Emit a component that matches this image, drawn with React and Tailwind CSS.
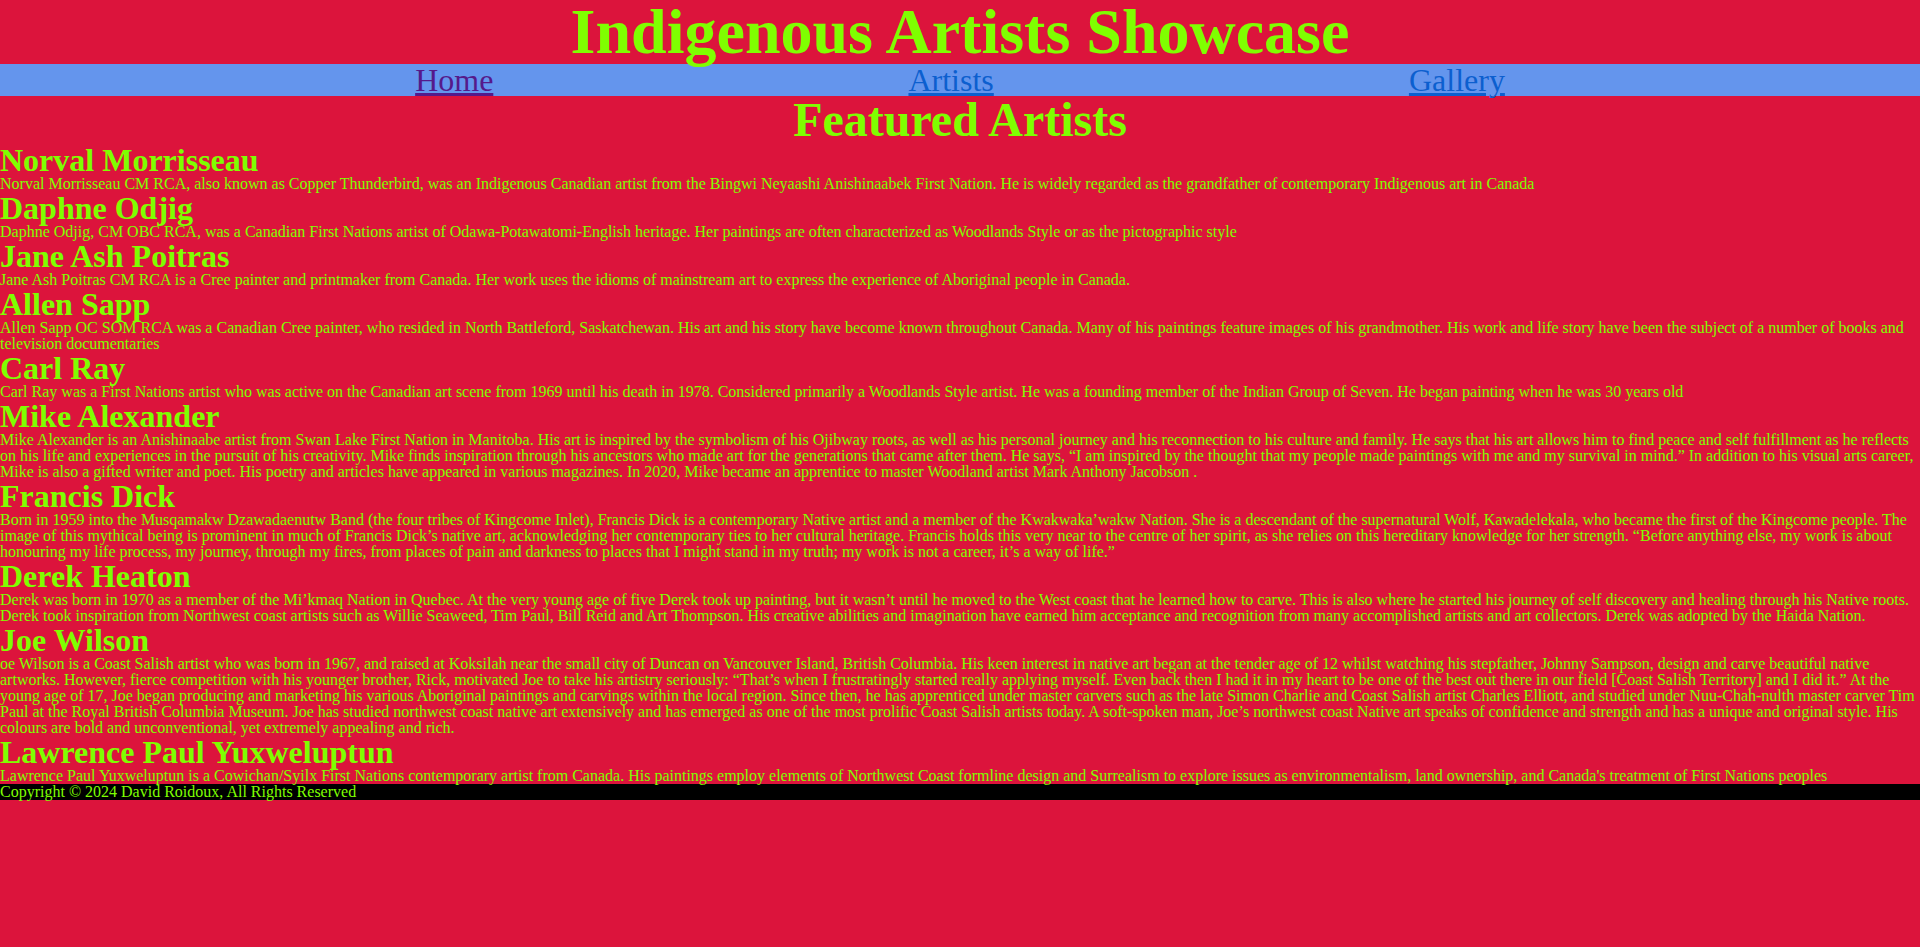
import React from "react";

const artists = [
  {
    name: "Norval Morrisseau",
    bio: "Norval Morrisseau CM RCA, also known as Copper Thunderbird, was an Indigenous Canadian artist from the Bingwi Neyaashi Anishinaabek First Nation. He is widely regarded as the grandfather of contemporary Indigenous art in Canada",
  },
  {
    name: "Daphne Odjig",
    bio: "Daphne Odjig, CM OBC RCA, was a Canadian First Nations artist of Odawa-Potawatomi-English heritage. Her paintings are often characterized as Woodlands Style or as the pictographic style",
  },
  {
    name: "Jane Ash Poitras",
    bio: "Jane Ash Poitras CM RCA is a Cree painter and printmaker from Canada. Her work uses the idioms of mainstream art to express the experience of Aboriginal people in Canada.",
  },
  {
    name: "Allen Sapp",
    bio: "Allen Sapp OC SOM RCA was a Canadian Cree painter, who resided in North Battleford, Saskatchewan. His art and his story have become known throughout Canada. Many of his paintings feature images of his grandmother. His work and life story have been the subject of a number of books and television documentaries",
  },
  {
    name: "Carl Ray",
    bio: "Carl Ray was a First Nations artist who was active on the Canadian art scene from 1969 until his death in 1978. Considered primarily a Woodlands Style artist. He was a founding member of the Indian Group of Seven. He began painting when he was 30 years old",
  },
  {
    name: "Mike Alexander",
    bio: "Mike Alexander is an Anishinaabe artist from Swan Lake First Nation in Manitoba. His art is inspired by the symbolism of his Ojibway roots, as well as his personal journey and his reconnection to his culture and family. He says that his art allows him to find peace and self fulfillment as he reflects on his life and experiences in the pursuit of his creativity. Mike finds inspiration through his ancestors who made art for the generations that came after them. He says, \u201cI am inspired by the thought that my people made paintings with me and my survival in mind.\u201d In addition to his visual arts career, Mike is also a gifted writer and poet. His poetry and articles have appeared in various magazines. In 2020, Mike became an apprentice to master Woodland artist Mark Anthony Jacobson .",
  },
  {
    name: "Francis Dick",
    bio: "Born in 1959 into the Musqamakw Dzawadaenutw Band (the four tribes of Kingcome Inlet), Francis Dick is a contemporary Native artist and a member of the Kwakwaka\u2019wakw Nation. She is a descendant of the supernatural Wolf, Kawadelekala, who became the first of the Kingcome people. The image of this mythical being is prominent in much of Francis Dick\u2019s native art, acknowledging her contemporary ties to her cultural heritage. Francis holds this very near to the centre of her spirit, as she relies on this hereditary knowledge for her strength. \u201cBefore anything else, my work is about honouring my life process, my journey, through my fires, from places of pain and darkness to places that I might stand in my truth; my work is not a career, it\u2019s a way of life.\u201d",
  },
  {
    name: "Derek Heaton",
    bio: "Derek was born in 1970 as a member of the Mi\u2019kmaq Nation in Quebec. At the very young age of five Derek took up painting, but it wasn\u2019t until he moved to the West coast that he learned how to carve. This is also where he started his journey of self discovery and healing through his Native roots. Derek took inspiration from Northwest coast artists such as Willie Seaweed, Tim Paul, Bill Reid and Art Thompson. His creative abilities and imagination have earned him acceptance and recognition from many accomplished artists and art collectors. Derek was adopted by the Haida Nation.",
  },
  {
    name: "Joe Wilson",
    bio: "oe Wilson is a Coast Salish artist who was born in 1967, and raised at Koksilah near the small city of Duncan on Vancouver Island, British Columbia. His keen interest in native art began at the tender age of 12 whilst watching his stepfather, Johnny Sampson, design and carve beautiful native artworks. However, fierce competition with his younger brother, Rick, motivated Joe to take his artistry seriously: \u201cThat\u2019s when I frustratingly started really applying myself. Even back then I had it in my heart to be one of the best out there in our field [Coast Salish Territory] and I did it.\u201d At the young age of 17, Joe began producing and marketing his various Aboriginal paintings and carvings within the local region. Since then, he has apprenticed under master carvers such as the late Simon Charlie and Coast Salish artist Charles Elliott, and studied under Nuu-Chah-nulth master carver Tim Paul at the Royal British Columbia Museum. Joe has studied northwest coast native art extensively and has emerged as one of the most prolific Coast Salish artists today. A soft-spoken man, Joe\u2019s northwest coast Native art speaks of confidence and strength and has a unique and original style. His colours are bold and unconventional, yet extremely appealing and rich.",
  },
  {
    name: "Lawrence Paul Yuxweluptun",
    bio: "Lawrence Paul Yuxweluptun is a Cowichan/Syilx First Nations contemporary artist from Canada. His paintings employ elements of Northwest Coast formline design and Surrealism to explore issues as environmentalism, land ownership, and Canada's treatment of First Nations peoples",
  },
];

const App = () => {
  return (
    <div className="min-h-screen bg-[#dc143c] text-[#7fff00] font-['Liberation_Serif',serif] leading-none">
      <header>
        <h1 className="text-center text-[64px] font-bold leading-[64px]">Indigenous Artists Showcase</h1>
        <nav className="flex justify-evenly bg-[#6495ed] h-8">
          <a href="#" className="text-[32px] leading-8 underline text-[#551a8b]">Home</a>
          <a href="#" className="text-[32px] leading-8 underline text-[#0c5fcf]">Artists</a>
          <a href="#" className="text-[32px] leading-8 underline text-[#0c5fcf]">Gallery</a>
        </nav>
      </header>
      <main>
        <h2 className="text-center text-[48px] font-bold leading-[48px]">Featured Artists</h2>
        {artists.map((a) => (
          <section key={a.name}>
            <h3 className="text-[32px] font-bold leading-8">{a.name}</h3>
            <p className="text-base leading-4">{a.bio}</p>
          </section>
        ))}
      </main>
      <footer className="bg-black text-base leading-4">Copyright © 2024 David Roidoux, All Rights Reserved</footer>
    </div>
  );
};

export default App;
